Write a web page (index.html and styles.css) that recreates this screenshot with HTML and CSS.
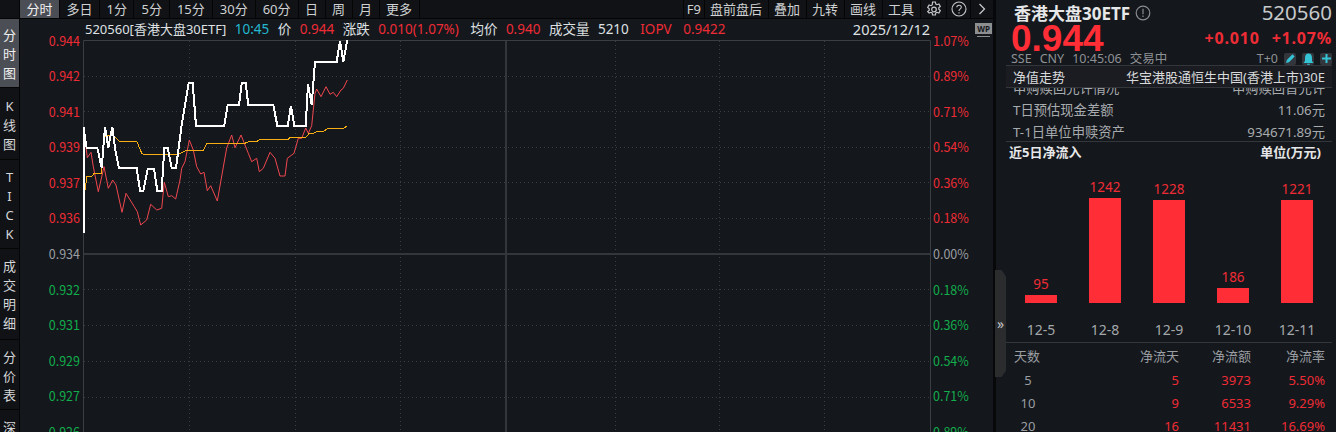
FILE: index.html
```html
<!DOCTYPE html>
<html lang="zh-CN">
<head>
  <meta charset="UTF-8" />
  <title>香港大盘30ETF 520560</title>
  <link rel="stylesheet" href="styles.css">
</head>
<body>
<div class="app">

  <div class="main">
    <div class="toolbar">
      <div class="corner"></div>
      <div class="tool active">分时</div>
      <div class="tool">多日</div>
      <div class="tool">1分</div>
      <div class="tool tool-wide">5分</div>
      <div class="tool tool-wide">15分</div>
      <div class="tool tool-wide">30分</div>
      <div class="tool tool-wide">60分</div>
      <div class="tool">日</div>
      <div class="tool">周</div>
      <div class="tool">月</div>
      <div class="tool">更多</div>
      <div class="tool-gap"></div>
      <div class="tool tool-f9">F9</div>
      <div class="tool tool-tight">盘前盘后</div>
      <div class="tool tool-tight">叠加</div>
      <div class="tool tool-tight">九转</div>
      <div class="tool tool-tight">画线</div>
      <div class="tool tool-tight">工具</div>
      <div class="tool tool-icon tool-gear">
        <svg width="16" height="16" viewBox="0 0 16 16" fill="none" stroke="#c4c6c8" stroke-width="1.2">
          <path d="M6.6 1h2.8l.4 2 1.2.7 1.9-.7 1.4 2.4-1.5 1.4v1.4l1.5 1.4-1.4 2.4-1.9-.7-1.2.7-.4 2H6.6l-.4-2-1.2-.7-1.9.7L1.700 10.600l1.500-1.400V7.800L1.700 6.400 3.100 4l1.900.7 1.200-.7z"/>
          <circle cx="8" cy="8.500" r="2.300"/>
        </svg>
      </div>
      <div class="tool tool-icon tool-help">
        <svg width="16" height="16" viewBox="0 0 16 16" fill="none" stroke="#c4c6c8" stroke-width="1.100">
          <circle cx="8" cy="8" r="7"/>
          <path d="M5.800 6.300C5.800 3.500 10.300 3.500 10.300 6.200 10.300 7.900 8 7.900 8 10"/>
          <path d="M8 11.200v1.300"/>
        </svg>
      </div>
      <div class="tool tool-icon tool-more">
        <svg width="8" height="12" viewBox="0 0 8 12" fill="none" stroke="#c4c6c8" stroke-width="1.300">
          <path d="M1.500 1l5 5-5 5"/>
        </svg>
      </div>
    </div>

    <div class="workspace">
      <div class="sidebar">
        <div class="side-tab tab-time active">分时图</div>
        <div class="side-tab tab-kline">K线图</div>
        <div class="side-tab tab-tick"><span>T</span><span>I</span><span>C</span><span>K</span></div>
        <div class="side-tab tab-deals">成交明细</div>
        <div class="side-tab tab-price">分价表</div>
        <div class="side-tab tab-depth">深</div>
      </div>

      <div class="chart">
        <div class="info-row">
          <span class="light info-code">520560[香港大盘30ETF]</span>
          <span class="cyan">10:45</span>
          <span class="light">价</span>
          <span class="red">0.944</span>
          <span class="light">涨跌</span>
          <span class="red">0.010(1.07%)</span>
          <span class="light info-group">均价</span>
          <span class="red">0.940</span>
          <span class="light">成交量</span>
          <span class="light">5210</span>
          <span class="red info-group">IOPV</span>
          <span class="red info-group">0.9422</span>
          <span class="light info-date">2025/12/12</span>
        </div>
        <div class="wp-cell">
          <div class="wp-screen">WP</div>
          <div class="wp-stand"></div>
        </div>

        <div class="axis axis-left">
          <div class="red">0.944</div>
          <div class="red">0.942</div>
          <div class="red">0.941</div>
          <div class="red">0.939</div>
          <div class="red">0.937</div>
          <div class="red">0.936</div>
          <div class="grey">0.934</div>
          <div class="green">0.932</div>
          <div class="green">0.931</div>
          <div class="green">0.929</div>
          <div class="green">0.927</div>
          <div class="green">0.926</div>
        </div>

        <svg class="plot" viewBox="83 40 848 392" fill="none">
          <!-- horizontal grid -->
          <g class="grid-dots">
            <path d="M84 76.500H930M84 111.500H930M84 147.500H930M84 182.500H930M84 218.500H930M84 289.500H930M84 325.500H930M84 361.500H930M84 397.500H930"/>
            <path d="M189.500 41V432M295.500 41V432M400.500 41V432M615.500 41V432M719.500 41V432M824.500 41V432"/>
          </g>
          <path class="grid-solid" d="M83.500 432V40.500H930.500V432"/>
          <path class="grid-mid" d="M84 254H930M506 41V432"/>

          <polyline class="line-iopv" points="85.300,141 87.300,157.700 91,152.300 93.300,166.700 98.300,191.700 104,166.700 108.300,188.300 112.700,180 116,185 122,212.300 126,193.300 134.300,206.700 137.300,211.700 140.700,225 146.700,220 150.700,204.300 156.700,210 161.700,208.300 164.300,182.300 168.300,196.700 171.700,195.700 175.700,199 180,180 181.700,168.300 185,161.700 189.300,140 193.300,150 196.700,166.700 200.700,174 204,172.300 207.300,190.700 210.700,185.700 217.300,201 226.700,148 231.700,135 235,147.700 241,135 248.300,153.300 251.700,161.700 256.700,158.300 259.300,171.700 263.300,168.300 270,152.300 275,158.300 280,176 285,176 287.300,158.300 294,153.300 298.300,138.300 301.700,138.300 305.700,128 308.300,133.300 311.700,125.700 315,93.300 316.700,89 321,96.700 326,86.700 330,94.300 333.300,92.300 336.700,96.700 341,90 343.300,88.300 347.300,80"/>
          <polyline class="line-avg" points="85.300,190 86.700,176.700 91.700,176.700 94,173.300 101.700,173.300 104,137.700 106.700,135 113.300,136 119.300,141 136.700,141 141.700,153.300 143.300,154.300 178.300,154.300 186,150.700 203.300,150.700 206.700,143.300 245,143.300 248.300,141.700 256.700,141.700 260,139.300 288.300,139.300 290,137.300 306,137.300 309.300,133.300 313,133.300 316.700,131.700 323.300,131.700 326.700,129 343.300,128.300 346.700,126.300"/>
          <polyline class="line-price" points="83.500,233 83.500,126.700 86,145 86.700,147.700 97.300,147.700 101.700,168 105,126.700 108.300,147.700 112.300,126.700 115,148 119,168 136.700,168 140,190.700 143.300,190.700 147.700,169 154,169 157.300,190.700 161.700,190.700 164.300,148.300 167.700,148.300 171.700,168 176,168 181.700,125 188.700,83.300 192.700,83.300 196,125.700 224.300,125.700 227.700,105 239,105 241.700,83.300 245.700,83.300 248.300,105 273.300,105 277.300,125.700 287.700,125.700 291,105.700 294.300,125.700 305.700,125.700 308,84 311.700,105 315,61.700 336.700,61.700 340,40.700 343.300,61.700 348,36"/>
        </svg>

        <div class="axis axis-right">
          <div class="red">1.07%</div>
          <div class="red">0.89%</div>
          <div class="red">0.71%</div>
          <div class="red">0.54%</div>
          <div class="red">0.36%</div>
          <div class="red">0.18%</div>
          <div class="grey">0.00%</div>
          <div class="green">0.18%</div>
          <div class="green">0.36%</div>
          <div class="green">0.54%</div>
          <div class="green">0.71%</div>
          <div class="green">0.89%</div>
        </div>
      </div>
    </div>
  </div>

  <div class="panel">
    <div class="panel-handle">»</div>

    <div class="quote">
      <div class="quote-top">
        <div class="quote-name">香港大盘30ETF</div>
        <svg class="info-mark" width="16" height="16" viewBox="0 0 16 16" fill="none" stroke="#8a8d90" stroke-width="1.200">
          <circle cx="8" cy="8" r="6.800"/>
          <path d="M8 3.800v5.400M8 10.600v1.500"/>
        </svg>
        <div class="quote-code">520560</div>
      </div>
      <div class="quote-mid">
        <div class="quote-price">0.944</div>
        <div class="quote-change">+0.010</div>
        <div class="quote-change">+1.07%</div>
      </div>
      <div class="quote-meta">
        <span>SSE</span>
        <span>CNY</span>
        <span>10:45:06</span>
        <span>交易中</span>
        <span class="meta-t0">T+0</span>
        <span class="mini-btn">
          <svg width="11" height="11" viewBox="0 0 11 11"><path d="M1 10l.8-3L7.500 1.300l2.200 2.200L4 9.200z" fill="#35c3d6"/></svg>
        </span>
        <span class="mini-btn">
          <svg width="11" height="12" viewBox="0 0 11 12"><path d="M5.500 0.500C8 .5 9 2.500 9 5v3l1.500 2h-10L2 8V5C2 2.500 3 .5 5.500 .5zM4.200 10.800h2.600v1H4.200z" fill="#35c3d6"/></svg>
        </span>
        <span class="mini-btn">
          <svg width="11" height="11" viewBox="0 0 11 11"><path d="M4.500 1h2v3.500H10v2H6.500V10h-2V6.500H1v-2h3.500z" fill="#35c3d6"/></svg>
        </span>
      </div>
    </div>

    <div class="nav-row">
      <span>净值走势</span>
      <span>华宝港股通恒生中国(香港上市)30E</span>
    </div>

    <div class="detail">
      <div class="detail-inner">
        <div class="detail-row"><span>申购赎回允许情况</span><span>申购赎回皆允许</span></div>
        <div class="detail-row"><span>T日预估现金差额</span><span>11.06元</span></div>
        <div class="detail-row"><span>T-1日单位申赎资产</span><span>934671.89元</span></div>
      </div>
    </div>

    <div class="flow-head">
      <span>近5日净流入</span>
      <span>单位(万元)</span>
    </div>

    <div class="bars">
      <div class="bar-col">
        <div class="bar-value">95</div>
        <div class="bar" style="height:8px"></div>
        <div class="bar-date">12-5</div>
      </div>
      <div class="bar-col">
        <div class="bar-value">1242</div>
        <div class="bar" style="height:105px"></div>
        <div class="bar-date">12-8</div>
      </div>
      <div class="bar-col">
        <div class="bar-value">1228</div>
        <div class="bar" style="height:103px"></div>
        <div class="bar-date">12-9</div>
      </div>
      <div class="bar-col">
        <div class="bar-value">186</div>
        <div class="bar" style="height:15px"></div>
        <div class="bar-date">12-10</div>
      </div>
      <div class="bar-col">
        <div class="bar-value">1221</div>
        <div class="bar" style="height:103px"></div>
        <div class="bar-date">12-11</div>
      </div>
    </div>

    <div class="flow-table">
      <div class="flow-row flow-title">
        <span class="cell-days">天数</span><span>净流天</span><span>净流额</span><span>净流率</span>
      </div>
      <div class="flow-row">
        <span class="cell-days cell-num">5</span><span>5</span><span>3973</span><span>5.50%</span>
      </div>
      <div class="flow-row">
        <span class="cell-days cell-num">10</span><span>9</span><span>6533</span><span>9.29%</span>
      </div>
      <div class="flow-row">
        <span class="cell-days cell-num">20</span><span>16</span><span>11431</span><span>16.69%</span>
      </div>
    </div>
  </div>

</div>
</body>
</html>
```

FILE: styles.css
```css
* {
  margin: 0;
  padding: 0;
  box-sizing: border-box;
}

html, body {
  height: 100%;
  overflow: hidden;
  background: #14171c;
}

body {
  font-family: "Noto Sans", "Noto Sans CJK SC", sans-serif;
  font-size: 13px;
  color: #d8dadc;
}

.app {
  display: flex;
  width: 1336px;
  height: 432px;
  overflow: hidden;
}

.red { color: #ee2c36; }
.green { color: #12ad4c; }
.grey { color: #9a9ea2; }
.cyan { color: #23b7cf; }
.light { color: #dfe1e3; }

/* left side */
.main {
  width: 996px;
  flex-shrink: 0;
  display: flex;
  flex-direction: column;
  border-right: 3px solid #07080a;
}

.toolbar {
  display: flex;
  height: 19px;
  flex-shrink: 0;
  background: #101215;
  border-bottom: 1px solid #050506;
}

.corner {
  width: 20px;
  border-right: 1px solid #050506;
}

.tool {
  padding: 0 6.5px;
  line-height: 18px;
  color: #cfd1d3;
  border-right: 1px solid #050506;
  white-space: nowrap;
}

.tool.active {
  background: #4c4e55;
  color: #f0f0f0;
}

.tool-wide { padding: 0 7px; }
.tool-tight { padding: 0 6px 0 5px; }

.tool-gap {
  flex: 1;
  border-right: 1px solid #050506;
}

.tool-f9 { padding: 0 3px; }

.tool-icon {
  display: flex;
  align-items: center;
  justify-content: center;
  padding: 0;
}

.tool-gear { width: 26px; }
.tool-help { width: 24px; }
.tool-more { width: 22px; border-right: 0; }

.workspace {
  flex: 1;
  display: flex;
  min-height: 0;
}

.sidebar {
  width: 20px;
  flex-shrink: 0;
  background: #101215;
  border-right: 1px solid #050506;
}

.side-tab {
  line-height: 19px;
  text-align: center;
  word-break: break-all;
  color: #d4d6d8;
  border-bottom: 1px solid #050506;
}

.side-tab span { display: block; }

.side-tab.active {
  background: #4c4e55;
  color: #f0f0f0;
}

.tab-time { padding: 7px 0 4px; }
.tab-kline { padding: 9px 0 5px; }
.tab-tick { padding: 8px 0 4px; }
.tab-deals { padding: 8px 0 6px; }
.tab-price { padding: 8px 0 4px; }
.tab-depth { padding: 8px 0 0; border-bottom: 0; }

/* chart */
.chart {
  flex: 1;
  min-width: 0;
  display: grid;
  grid-template-columns: 63px 848px 1fr;
  grid-template-rows: 21px 1fr;
}

.info-row {
  grid-column: 1 / 3;
  display: flex;
  gap: 8.5px;
  padding-left: 65px;
  font-size: 13.5px;
  line-height: 21px;
  white-space: nowrap;
}

.info-code { font-size: 13px; }
.info-group { margin-left: 3px; }

.info-date {
  margin-left: auto;
  padding-right: 1px;
  font-size: 14.5px;
}

.wp-cell {
  display: flex;
  flex-direction: column;
  align-items: center;
  width: 17px;
  margin-left: auto;
  margin-right: 1px;
  padding-top: 4px;
}

.wp-screen {
  width: 17px;
  height: 11px;
  background: #8c8e90;
  color: #14171c;
  font-size: 8px;
  font-weight: 700;
  line-height: 11px;
  text-align: center;
}

.wp-stand {
  width: 13px;
  height: 1px;
  margin-top: 2px;
  background: #8c8e90;
}

.axis {
  font-family: "Noto Sans CJK SC", sans-serif;
  font-size: 12.5px;
  margin-top: -17.5px;
}

.axis div {
  height: 35.6px;
  line-height: 35.6px;
}

.axis-left {
  padding-right: 3px;
  text-align: right;
}

.axis-right {
  padding-left: 2px;
}

.plot {
  display: block;
  width: 848px;
  height: 392px;
}

.grid-dots {
  stroke: #3a3d42;
  stroke-width: 1;
  stroke-dasharray: 1 3;
}

.grid-solid {
  stroke: #3a3d42;
  stroke-width: 1;
}

.grid-mid {
  stroke: #33363a;
  stroke-width: 2;
}

.line-price {
  stroke: #ffffff;
  stroke-width: 2;
  shape-rendering: crispEdges;
}

.line-iopv {
  stroke: #f0474f;
  stroke-width: 1;
}

.line-avg {
  stroke: #f7ad14;
  stroke-width: 1;
  shape-rendering: crispEdges;
}

/* right panel */
.panel {
  position: relative;
  flex: 1;
  padding: 0 4px 0 10px;
  min-width: 0;
}

.panel-handle {
  position: absolute;
  left: -1px;
  top: 270px;
  width: 11px;
  height: 107px;
  background: #2b2c2e;
  clip-path: polygon(0 0, 60% 0, 100% 6%, 100% 94%, 60% 100%, 0 100%);
  color: #c4c6c8;
  font-size: 14px;
  line-height: 107px;
  text-align: center;
}

.quote {
  height: 66px;
  border-bottom: 1px solid #33363a;
}

.quote-top {
  display: flex;
  align-items: center;
  height: 25px;
  padding-left: 8px;
}

.quote-name {
  font-size: 17px;
  font-weight: 700;
  color: #e6e7e8;
}

.info-mark {
  margin-left: 5px;
}

.quote-code {
  margin-left: auto;
  font-size: 20.5px;
  line-height: 25px;
  color: #c6c8ca;
}

.quote-mid {
  display: flex;
  align-items: center;
  gap: 12px;
  height: 27px;
}

.quote-price {
  margin-right: auto;
  padding-left: 5px;
  font-family: "Liberation Sans", sans-serif;
  font-size: 37px;
  font-weight: 700;
  line-height: 27px;
  color: #ff2d35;
}

.quote-change {
  font-size: 16px;
  font-weight: 700;
  letter-spacing: 0.8px;
  line-height: 27px;
  color: #ee2c36;
}

.quote-meta {
  display: flex;
  align-items: center;
  gap: 8px;
  height: 13px;
  padding-left: 5px;
  font-size: 12.5px;
  line-height: 13px;
  color: #8e9194;
}

.meta-t0 {
  margin-left: auto;
}

.mini-btn {
  display: flex;
  align-items: center;
  justify-content: center;
  width: 12px;
  height: 12px;
  margin-left: -2px;
  background: #33363c;
  border-radius: 2px;
}

.nav-row {
  display: flex;
  justify-content: space-between;
  height: 22px;
  padding: 0 7px;
  line-height: 22px;
  background: #1a1c21;
  border-bottom: 1px solid #33363a;
  color: #d8dadc;
}

.detail {
  height: 54px;
  overflow: hidden;
  border-bottom: 1px solid #33363a;
}

.detail-inner {
  margin-top: -11px;
}

.detail-row {
  display: flex;
  justify-content: space-between;
  height: 22px;
  padding: 0 7px;
  font-size: 13.3px;
  line-height: 22px;
  color: #a8abae;
}

.flow-head {
  display: flex;
  justify-content: space-between;
  height: 22px;
  padding: 0 11px 0 3px;
  font-weight: 700;
  line-height: 21px;
  color: #e6e7e8;
}

.bars {
  display: flex;
  height: 179px;
  padding: 0 19px;
  justify-content: space-between;
  border-bottom: 1px solid #33363a;
}

.bar-col {
  width: 32px;
  display: flex;
  flex-direction: column;
  justify-content: flex-end;
  align-items: center;
}

.bar-value {
  margin-bottom: 2px;
  font-size: 13.5px;
  line-height: 18px;
  color: #ee2c36;
}

.bar {
  width: 32px;
  flex-shrink: 0;
  background: #ff2d35;
}

.bar-date {
  height: 39px;
  padding-top: 17px;
  font-size: 14px;
  line-height: 20px;
  color: #a4a7aa;
  white-space: nowrap;
}

.flow-table {
  padding-top: 2px;
}

.flow-row {
  display: grid;
  grid-template-columns: 1fr 72px 72px 74px;
  height: 23px;
  padding-right: 7px;
  line-height: 23px;
  text-align: right;
  color: #ee2c36;
}

.flow-title {
  height: 24px;
  color: #9a9ea2;
}

.cell-days {
  padding-left: 8px;
  text-align: left;
  color: #9a9ea2;
}

.cell-num {
  padding-left: 0;
  width: 44px;
  text-align: center;
}
```
